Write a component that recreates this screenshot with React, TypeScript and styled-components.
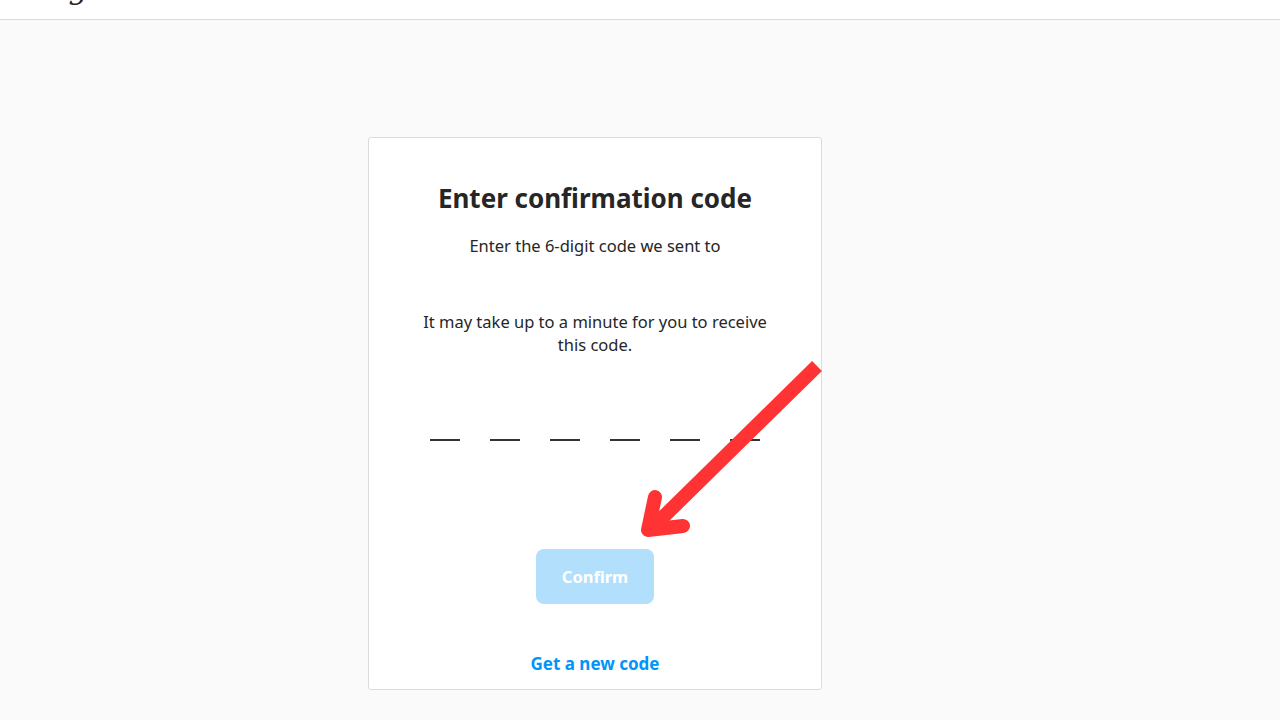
import React from 'react'
import styled, { createGlobalStyle } from 'styled-components'

const GlobalStyle = createGlobalStyle`
  html, body {
    margin: 0;
    padding: 0;
    background: #fafafa;
    font-family: "Noto Sans", "Open Sans", Arial, sans-serif;
    color: #262626;
  }
`

const Page = styled.div`
  width: 1280px;
  height: 720px;
  position: relative;
  overflow: hidden;
  background: #fafafa;
`

const TopBar = styled.header`
  height: 19px;
  background: #fff;
  border-bottom: 1px solid #dbdbdb;
  overflow: hidden;
`

const Logo = styled.span`
  display: block;
  margin: -34px 0 0 -8px;
  font-family: "DejaVu Serif", serif;
  font-style: italic;
  font-size: 30px;
  line-height: 45px;
  color: #262626;
`

const Main = styled.main`
  display: flex;
  padding: 117px 0 0 368px;
`

const Card = styled.section`
  width: 452px;
  height: 551px;
  background: #fff;
  border: 1px solid #dbdbdb;
  border-radius: 3px;
  display: flex;
  flex-direction: column;
  align-items: center;
`

const Title = styled.h1`
  margin: 42px 0 0;
  font-size: 26px;
  font-weight: 700;
  line-height: 36px;
  color: #262626;
`

const Text = styled.p<{ $top: number }>`
  margin: ${(p) => p.$top}px 0 0;
  width: 354px;
  text-align: center;
  font-size: 16.5px;
  line-height: 23px;
  color: #262626;
`

const CodeRow = styled.div`
  display: flex;
  gap: 30px;
  margin-top: 65px;
  height: 20px;
  align-items: flex-end;
`

const Dash = styled.span`
  display: block;
  width: 30px;
  height: 2px;
  background: #333;
`

const ConfirmButton = styled.button`
  margin-top: 108px;
  width: 118px;
  height: 55px;
  border: none;
  border-radius: 8px;
  background: #b2dffc;
  color: #fff;
  font-family: inherit;
  font-size: 16.5px;
  font-weight: 700;
`

const NewCode = styled.a`
  margin-top: 48px;
  color: #0095f6;
  font-size: 17px;
  font-weight: 700;
  text-decoration: none;
`

const ArrowOverlay = styled.svg`
  position: absolute;
  left: 0;
  top: 0;
  pointer-events: none;
`

export default function App() {
  return (
    <Page>
      <GlobalStyle />
      <TopBar>
        <Logo>Instagram</Logo>
      </TopBar>
      <Main>
        <Card>
          <Title>Enter confirmation code</Title>
          <Text $top={18}>Enter the 6-digit code we sent to</Text>
          <Text $top={53}>It may take up to a minute for you to receive this code.</Text>
          <CodeRow>
            {[0, 1, 2, 3, 4, 5].map((i) => (
              <Dash key={i} />
            ))}
          </CodeRow>
          <ConfirmButton>Confirm</ConfirmButton>
          <NewCode href="#">Get a new code</NewCode>
        </Card>
      </Main>
      <ArrowOverlay width="1280" height="720" viewBox="0 0 1280 720">
        <g stroke="#ff3333" strokeWidth="14" fill="none" strokeLinejoin="round">
          <line x1="817" y1="366" x2="652" y2="528" strokeLinecap="butt" />
          <polyline points="655,497 648,530 683,526" strokeLinecap="round" />
        </g>
      </ArrowOverlay>
    </Page>
  )
}
